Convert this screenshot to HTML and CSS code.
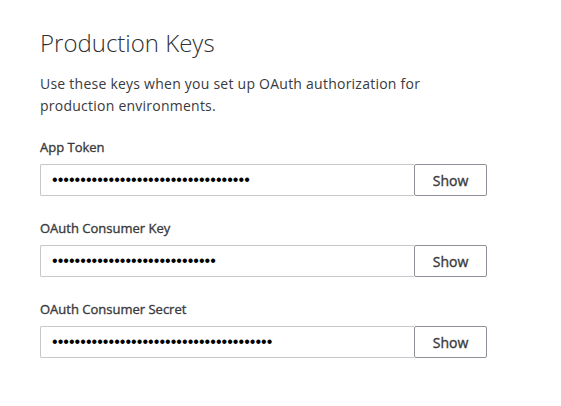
FILE: index.html
```html
<!DOCTYPE html>
<html lang="en">
<head>
<meta charset="utf-8">
<title>Production Keys</title>
<link rel="stylesheet" href="styles.css">
</head>
<body>
<main class="panel">
  <h1 class="title">Production Keys</h1>
  <p class="desc">Use these keys when you set up OAuth authorization for production environments.</p>

  <div class="field">
    <label class="label">App Token</label>
    <div class="row">
      <div class="secret">•••••••••••••••••••••••••••••••••••</div>
      <button class="show">Show</button>
    </div>
  </div>

  <div class="field">
    <label class="label">OAuth Consumer Key</label>
    <div class="row">
      <div class="secret">•••••••••••••••••••••••••••••</div>
      <button class="show">Show</button>
    </div>
  </div>

  <div class="field">
    <label class="label">OAuth Consumer Secret</label>
    <div class="row">
      <div class="secret">•••••••••••••••••••••••••••••••••••••••</div>
      <button class="show">Show</button>
    </div>
  </div>
</main>
</body>
</html>
```

FILE: styles.css
```css
html, body {
  margin: 0;
  padding: 0;
  background: #ffffff;
}

body {
  font-family: "Open Sans", "Liberation Sans", sans-serif;
  color: #393a3d;
}

.panel {
  padding: 27px 0 0 40px;
  width: 447px;
}

.title {
  margin: 0;
  font-size: 24px;
  font-weight: 300;
  line-height: 32px;
  color: #2f3033;
}

.desc {
  margin: 14px 0 0 0;
  font-size: 14px;
  line-height: 22px;
  letter-spacing: 0.24px;
  width: 420px;
}

.field {
  margin-top: 21px;
}

.field + .field {
  margin-top: 23px;
}

.label {
  display: block;
  font-size: 13px;
  font-weight: 400;
  -webkit-text-stroke: 0.35px currentColor;
  line-height: 18px;
  margin-bottom: 8px;
}

.row {
  display: flex;
  height: 32px;
}

.secret {
  flex: 1;
  box-sizing: border-box;
  height: 32px;
  border: 1px solid #c6c8cc;
  border-right: none;
  border-radius: 2px 0 0 2px;
  padding: 0 0 0 11px;
  font-family: "Liberation Sans", Arial, sans-serif;
  font-size: 16px;
  line-height: 30px;
  color: #000;
  letter-spacing: 0.05px;
}

.show {
  box-sizing: border-box;
  width: 73px;
  height: 32px;
  border: 1px solid #8d9096;
  border-radius: 2px;
  background: #fff;
  font-family: "Open Sans", "Liberation Sans", sans-serif;
  font-size: 14px;
  font-weight: 400;
  -webkit-text-stroke: 0.35px currentColor;
  color: #393a3d;
  padding: 0;
}
```
